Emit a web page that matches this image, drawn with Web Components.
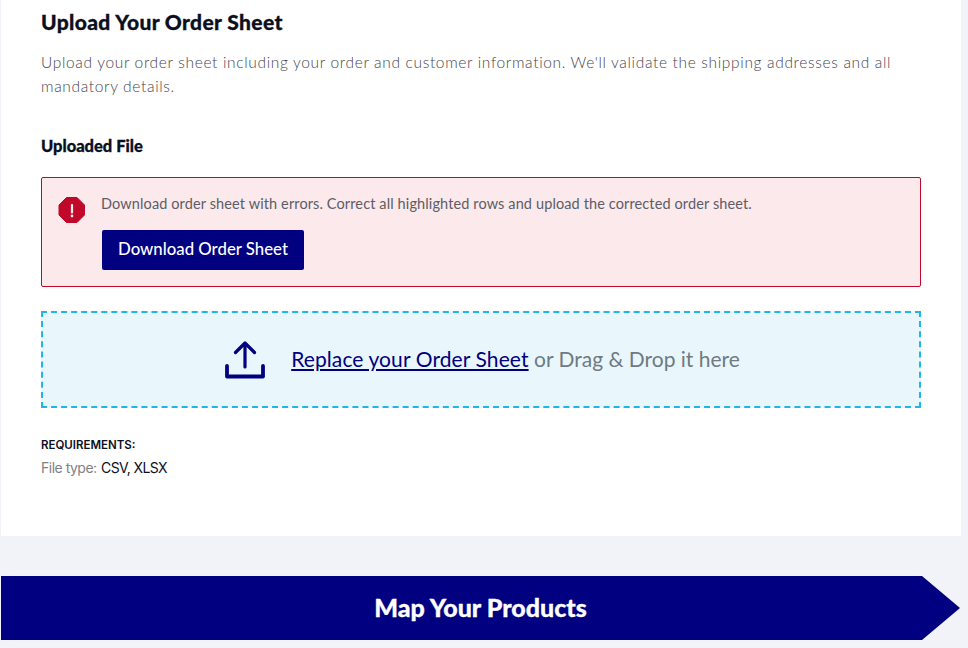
<!DOCTYPE html>
<html lang="en">
<head>
<meta charset="utf-8">
<title>Upload Your Order Sheet</title>
<style>
    html, body { margin: 0; height: 648px; overflow: hidden; background: #f2f3f8; }
    body { font-family: "Lato", "Liberation Sans", sans-serif; }
</style>
</head>
<body>
<order-page>
    <upload-card title="Upload Your Order Sheet">
        <error-banner>Download order sheet with errors. Correct all highlighted rows and upload the corrected order sheet.</error-banner>
        <drop-zone></drop-zone>
    </upload-card>
    <step-arrow>Map Your Products</step-arrow>
</order-page>

<script>
class OrderPage extends HTMLElement {
    constructor() {
        super();
        this.attachShadow({ mode: 'open' });
        this.shadowRoot.innerHTML = `
            <style>
                :host {
                    display: flex;
                    flex-direction: column;
                    gap: 40px;
                    padding-left: 1px;
                    width: 960px;
                }
            </style>
            <slot></slot>
        `;
    }
}

class UploadCard extends HTMLElement {
    constructor() {
        super();
        this.attachShadow({ mode: 'open' });
    }

    connectedCallback() {
        const title = this.getAttribute('title') || '';
        this.shadowRoot.innerHTML = `
            <style>
                :host {
                    display: block;
                    box-sizing: border-box;
                    height: 536px;
                    background: #fff;
                    padding: 10px 40px 0;
                    color: #0b0f1e;
                }
                h2 {
                    margin: 0;
                    font-size: 21px;
                    line-height: 24px;
                    letter-spacing: 0.36px;
                    font-weight: 900;
                    -webkit-text-stroke: 0.3px #0b0f1e;
                }
                .intro {
                    margin: 16px 0 0;
                    font-size: 15.5px;
                    font-weight: 300;
                    line-height: 24px;
                    letter-spacing: 0.66px;
                    color: #45464e;
                }
                h3 {
                    margin: 36px 0 0;
                    font-size: 16.5px;
                    line-height: 24px;
                    font-weight: 900;
                    -webkit-text-stroke: 0.3px #0b0f1e;
                }
                .stack {
                    display: flex;
                    flex-direction: column;
                    gap: 24px;
                    margin-top: 19px;
                }
                .req-title {
                    margin: 29px 0 0;
                    font-family: "Inter", "Liberation Sans", sans-serif;
                    font-size: 11.5px;
                    line-height: 16px;
                    font-weight: 600;
                }
                .req {
                    margin: 5px 0 0;
                    font-family: "Inter", "Liberation Sans", sans-serif;
                    font-size: 14px;
                    line-height: 20px;
                    letter-spacing: -0.5px;
                    color: #808187;
                }
                .req span { color: #0b0f1e; margin-left: 1px; letter-spacing: -0.6px; }
            </style>
            <h2>${title}</h2>
            <p class="intro">Upload your order sheet including your order and customer information. We'll validate the shipping addresses and all mandatory details.</p>
            <h3>Uploaded File</h3>
            <div class="stack"><slot></slot></div>
            <p class="req-title">REQUIREMENTS:</p>
            <p class="req">File type: <span>CSV, XLSX</span></p>
        `;
    }
}

class ErrorBanner extends HTMLElement {
    constructor() {
        super();
        this.attachShadow({ mode: 'open' });
        this.shadowRoot.innerHTML = `
            <style>
                :host {
                    display: flex;
                    box-sizing: border-box;
                    height: 110px;
                    gap: 16px;
                    padding: 14px 16px 0;
                    background: #fbe9eb;
                    border: 1px solid #c0092a;
                    border-radius: 2px;
                }
                svg { flex: none; margin-top: 4px; }
                .msg {
                    font-size: 14.5px;
                    line-height: 24px;
                    letter-spacing: 0.12px;
                    color: #5c5d66;
                    margin-left: -1px;
                }
                button {
                    display: block;
                    margin-top: 14px;
                    height: 40px;
                    width: 202px;
                    padding: 0 0 3px;
                    border: none;
                    border-radius: 2px;
                    background: #000080;
                    color: #fff;
                    font: 500 16.8px "Lato", "Liberation Sans", sans-serif;
                }
            </style>
            <svg width="28" height="28" viewBox="0 0 28 28">
                <polygon points="8.5,1.500 19,1.500 26.500,9 26.500,19 19,26.500 8.500,26.500 1,19 1,9" fill="#c0092a" stroke="#c0092a" stroke-linejoin="round" stroke-width="1"/>
                <rect x="12.9" y="8" width="2.2" height="9.5" rx="1" fill="#fbe9eb"/>
                <circle cx="14" cy="20" r="1.400" fill="#fbe9eb"/>
            </svg>
            <div>
                <div class="msg"><slot></slot></div>
                <button type="button">Download Order Sheet</button>
            </div>
        `;
    }
}

class DropZone extends HTMLElement {
    constructor() {
        super();
        this.attachShadow({ mode: 'open' });
        this.shadowRoot.innerHTML = `
            <style>
                :host {
                    display: flex;
                    align-items: center;
                    justify-content: center;
                    gap: 26px;
                    box-sizing: border-box;
                    height: 97px;
                    padding: 0 0 3px 3px;
                    background: #e9f7fd;
                    border: 2px dashed #1fb6f0;
                    font-size: 21px;
                    color: #6f7a82;
                }
                svg { flex: none; margin-top: 3px; }
                a { color: #000080; text-decoration: underline; letter-spacing: 0.1px; }
            </style>
            <svg width="40" height="40" viewBox="0 0 40 40" fill="none" stroke="#000080" stroke-linecap="round" stroke-linejoin="round">
                <path d="M20 27V4M10.500 12.500 20 3l9.500 9.500" stroke-width="3.200"/>
                <path d="M2 26v10.500h36V26" stroke-width="3.800"/>
            </svg>
            <div><a href="#">Replace your Order Sheet</a> or Drag &amp; Drop it here</div>
        `;
    }
}

class StepArrow extends HTMLElement {
    constructor() {
        super();
        this.attachShadow({ mode: 'open' });
        this.shadowRoot.innerHTML = `
            <style>
                :host {
                    display: flex;
                    align-items: center;
                    justify-content: center;
                    box-sizing: border-box;
                    height: 64px;
                    width: 959px;
                    padding-bottom: 3px;
                    background: #000080;
                    clip-path: polygon(0 0, 921px 0, 100% 50%, 921px 100%, 0 100%);
                    color: #fff;
                    font-size: 25px;
                    font-weight: 900;
                    -webkit-text-stroke: 0.3px #fff;
                }
            </style>
            <slot></slot>
        `;
    }
}

customElements.define('order-page', OrderPage);
customElements.define('upload-card', UploadCard);
customElements.define('error-banner', ErrorBanner);
customElements.define('drop-zone', DropZone);
customElements.define('step-arrow', StepArrow);
</script>
</body>
</html>
